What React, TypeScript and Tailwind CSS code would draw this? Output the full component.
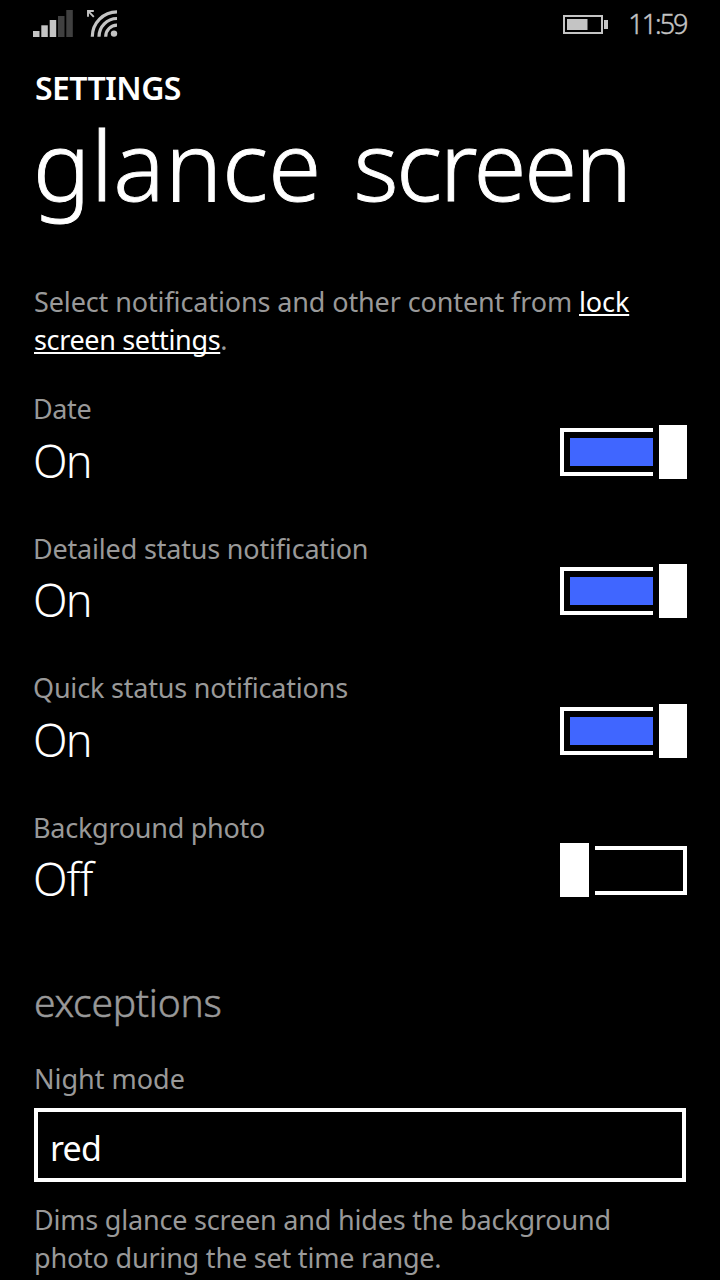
/**
 * Glance screen settings page.
 *
 * Shows the phone status bar, the list of glance screen toggles and the
 * night mode picker under the exceptions heading.
 */

/**
 * Type definition for a single toggle setting.
 */
type Setting = {
  label: string;
  tracking: string;
  on: boolean;
}

const settings: Setting[] = [
  { label: "Date", tracking: "tracking-[-0.4px]", on: true },
  { label: "Detailed status notification", tracking: "tracking-[-0.19px]", on: true },
  { label: "Quick status notifications", tracking: "tracking-[-0.2px]", on: true },
  { label: "Background photo", tracking: "tracking-[-0.26px]", on: false },
];

/**
 * Status bar with signal, wifi, battery and clock.
 */
function StatusBar() {
  return (
    <div className="flex h-[46px] items-start justify-between px-[33px] text-[#c4c4c4]">
      <div className="flex pt-[10px]">
        <svg width="40" height="27" viewBox="0 0 40 27">
          <rect x="0" y="21" width="6.5" height="6" fill="#c4c4c4" />
          <rect x="8.3" y="15.3" width="6.5" height="11.7" fill="#c4c4c4" />
          <rect x="16.7" y="10" width="6.5" height="17" fill="#c4c4c4" />
          <rect x="25" y="6" width="6.5" height="21" fill="#404040" />
          <rect x="33.3" y="0" width="6.5" height="27" fill="#404040" />
        </svg>
        <svg className="ml-[14px]" width="32" height="28" viewBox="0 0 32 28" fill="none" stroke="#c4c4c4">
          <path d="M1 6.8V1H6.8M1.2 1.2L6.8 6.8" strokeWidth="1.9" />
          <path d="M5.3 26.7A24.7 24.9 0 0 1 30 1.8" strokeWidth="3.2" />
          <path d="M12 26.7A18 18.2 0 0 1 30 8.5" strokeWidth="3.2" />
          <path d="M18.7 26.7A11.3 11.6 0 0 1 30 15.1" strokeWidth="3.2" />
          <circle cx="27" cy="23.6" r="3.2" fill="#c4c4c4" stroke="none" />
        </svg>
      </div>
      <div className="flex">
        <svg className="mt-[15px]" width="46" height="20" viewBox="0 0 46 20">
          <rect x="1" y="1" width="38" height="17" fill="none" stroke="#c4c4c4" strokeWidth="2" />
          <rect x="4" y="4" width="20.5" height="11" fill="#c4c4c4" />
          <rect x="41" y="5" width="4" height="9" fill="#c4c4c4" />
        </svg>
        <span className="ml-[18px] w-[60px] whitespace-nowrap pr-[0.5px] text-right text-[27px] font-light leading-[48px] tracking-[-2px] [-webkit-text-stroke:0.4px]">
          11:59
        </span>
      </div>
    </div>
  );
}

/**
 * Two-state switch with a rectangular thumb.
 *
 * @param props.on - Whether the switch is turned on
 */
function Toggle({ on }: { on: boolean }) {
  if (!on) {
    return (
      <div className="flex h-[54px] w-[127px] items-center justify-between">
        <div className="h-[54px] w-[29px] bg-white" />
        <div className="h-[49px] w-[92px] border-4 border-l-0 border-white" />
      </div>
    );
  }
  return (
    <div className="flex h-[54px] w-[127px] items-center justify-between">
      <div className="h-[48px] w-[93px] border-4 border-r-0 border-white py-[6px] pl-[6px]">
        <div className="h-full bg-[#4066ff]" />
      </div>
      <div className="h-[54px] w-[28px] bg-white" />
    </div>
  );
}

/**
 * Single settings row: caption, current value and switch.
 */
function SettingRow({ label, tracking, on }: Setting) {
  return (
    <div className="flex h-[139.5px] justify-between px-[33px]">
      <div className="pt-px">
        <div className={`text-[27px] leading-[38px] text-[#999999] ${tracking}`}>{label}</div>
        <div
          className={`mt-[5.5px] text-[45px] font-light leading-[54px] ${
            on ? "tracking-[-1.7px]" : "tracking-[-1px]"
          }`}
        >
          {on ? "On" : "Off"}
        </div>
      </div>
      <div className="pt-[35.5px]">
        <Toggle on={on} />
      </div>
    </div>
  );
}

export default function App() {
  return (
    <div className="h-[1280px] w-[720px] overflow-hidden bg-black font-['Noto_Sans',sans-serif] text-white">
      <StatusBar />

      <h1 className="mt-[22px] pl-[35px] text-[32px] font-semibold leading-[40px] tracking-[-0.6px]">
        SETTINGS
      </h1>
      <h2 className="flex gap-[32px] pl-[33px] text-[96px] font-light leading-[112px] [-webkit-text-stroke:0.9px]">
        <span className="tracking-[0.2px]">glance</span>
        <span className="tracking-[-2.2px]">screen</span>
      </h2>

      <p className="mt-[62.5px] whitespace-nowrap pl-[34px] text-[27px] leading-[38px] tracking-[-0.12px] text-[#999999]">
        Select notifications and other content from{" "}
        <span className="text-white underline decoration-2 underline-offset-2 [text-decoration-skip-ink:none]">lock</span>
        <br />
        <span className="tracking-[-0.35px] text-white underline decoration-2 underline-offset-2 [text-decoration-skip-ink:none]">screen settings</span>.
      </p>

      <div className="mt-[30.5px]">
        {settings.map((setting) => (
          <SettingRow key={setting.label} {...setting} />
        ))}
      </div>

      <h3 className="mt-[27.5px] pl-[34px] text-[39px] font-light leading-[54px] tracking-[-0.25px] text-[#999999] [-webkit-text-stroke:0.5px]">
        exceptions
      </h3>

      <div className="mt-[31.5px] pl-[34px] text-[27px] leading-[38px] text-[#999999]">Night mode</div>
      <div className="ml-[34px] mt-[9.5px] h-[74px] w-[652px] border-4 border-white pl-[12px] pt-[4px] text-[34px] leading-[64px] tracking-[-0.8px]">
        red
      </div>
      <p className="mt-[19px] whitespace-nowrap pl-[34px] text-[27px] leading-[38px] tracking-[-0.2px] text-[#999999]">
        Dims glance screen and hides the background
        <br />
        photo during the set time range.
      </p>
    </div>
  );
}
